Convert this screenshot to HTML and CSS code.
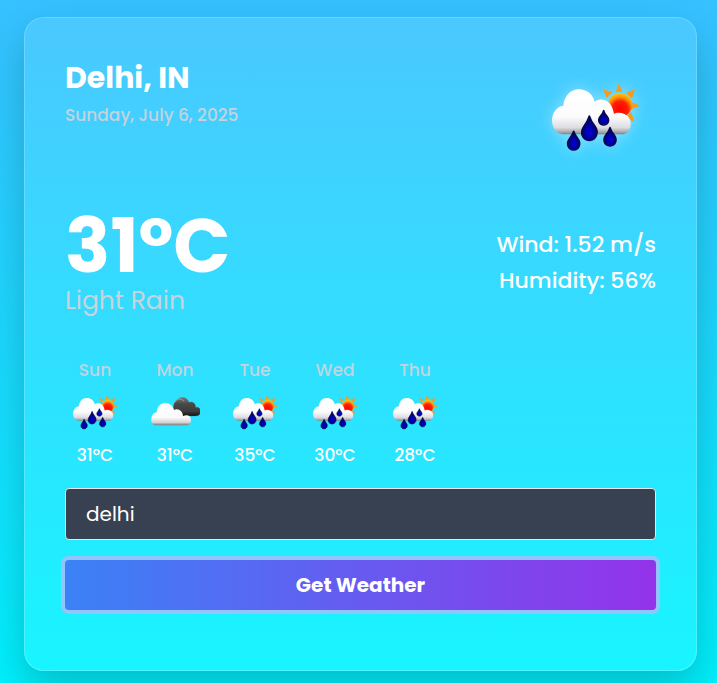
FILE: index.html
```html
<!DOCTYPE html>
<html lang="en">
<head>
<meta charset="utf-8">
<meta name="viewport" content="width=device-width, initial-scale=1">
<title>Weather</title>
<link rel="stylesheet" href="styles.css">
</head>
<body>
<svg class="defs" aria-hidden="true">
  <defs>
    <linearGradient id="cloud" x1="0" y1="58" x2="0" y2="194" gradientUnits="userSpaceOnUse">
      <stop offset="0" stop-color="#fff"/><stop offset=".6" stop-color="#fcfcfd"/>
      <stop offset=".84" stop-color="#dedee2"/><stop offset=".94" stop-color="#aaaab0"/><stop offset="1" stop-color="#777"/>
    </linearGradient>
    <radialGradient id="sun" cx=".5" cy=".68" r=".68">
      <stop offset="0" stop-color="#f00"/><stop offset=".5" stop-color="#ff2000"/>
      <stop offset=".75" stop-color="#ff9500"/><stop offset="1" stop-color="#ffc80b"/>
    </radialGradient>
    <radialGradient id="drop" cx=".5" cy=".65" r=".5">
      <stop offset="0" stop-color="#0000d8"/><stop offset=".5" stop-color="#0000ac"/><stop offset="1" stop-color="#050560"/>
    </radialGradient>
    <linearGradient id="dark" x1="0" y1="0" x2="0" y2="1">
      <stop offset="0" stop-color="#777"/><stop offset=".35" stop-color="#484848"/><stop offset=".75" stop-color="#3c3c3c"/><stop offset="1" stop-color="#111"/>
    </linearGradient>
    <symbol id="rain" viewBox="46 -6 294 294">
      <path fill="#f89a1c" d="M265 40l10 25-20 0zM217 58l28 9-17 17zM313 58l-9 28-18-18zM329 107l-28 11 0-22zM311 156l-27-14 18-16zM216 106l28-11v22z"/>
      <circle cx="268" cy="105" r="36" fill="url(#sun)"/>
      <path fill="url(#cloud)" d="M96 193C74 189 64 170 64 151 65 127 78 110 98 107 101 78 119 58 145 58 169 58 187 73 192 96 199 90 207 88 216 89 233 91 246 105 250 132 260 124 285 128 295 143 306 160 299 187 278 193Z"/>
      <g fill="url(#drop)" stroke="#080850" stroke-width="5" stroke-linejoin="round">
        <path d="M129 184Q132 194 142 207C152 220 146 239 129 240C112 239 106 222 116 207Q126 194 129 184Z"/>
        <path d="M176 138Q180 152 193 169C206 187 197 210 176 211C155 210 147 189 159 170Q172 152 176 138Z"/>
        <path d="M219 122Q221 131 229 139C238 151 233 164 219 165C205 164 200 151 209 139Q217 131 219 122Z"/>
        <path d="M238 173Q241 183 251 196C261 210 255 227 238 228C221 227 215 210 225 196Q235 183 238 173Z"/>
      </g>
    </symbol>
    <symbol id="clouds" viewBox="0 0 150 150">
      <path fill="url(#dark)" stroke="#666" stroke-width="1" d="M74 80C65 65 72 42 84 37 95 27 112 31 117 46 128 42 137 49 137 61 148 58 155 69 151 79Q148 87 138 87H84Z"/>
      <path fill="none" stroke="#999" stroke-width="3" d="M74 47Q77 37 89 36Q98 36 102 44"/>
      <path fill="url(#cloud2)" d="M18 115C8 115 3 107 4 96 5 84 10 78 20 76 21 60 31 48 46 48 59 48 69 57 72 69 84 62 99 72 99 88 111 80 123 87 123 99 123 109 117 115 110 115Z"/>
    </symbol>
    <linearGradient id="cloud2" x1="0" y1="0" x2="0" y2="1">
      <stop offset="0" stop-color="#fff"/><stop offset=".65" stop-color="#fafafa"/><stop offset=".87" stop-color="#d4d4d8"/><stop offset="1" stop-color="#777"/>
    </linearGradient>
  </defs>
</svg>
<main class="card">
  <header class="head">
    <div>
      <h1 class="city">Delhi, IN</h1>
      <p class="date">Sunday, July 6, 2025</p>
    </div>
    <svg class="hero" role="img" aria-label="Light rain"><use href="#rain"/></svg>
  </header>
  <section class="now">
    <div>
      <p class="temp">31°C</p>
      <p class="sky">Light Rain</p>
    </div>
    <div class="facts">
      <p>Wind: 1.52 m/s</p>
      <p>Humidity: 56%</p>
    </div>
  </section>
  <ul class="days">
    <li><span class="day">Sun</span><svg class="icon"><use href="#rain"/></svg><span class="deg">31°C</span></li>
    <li><span class="day">Mon</span><svg class="icon"><use href="#clouds"/></svg><span class="deg">31°C</span></li>
    <li><span class="day">Tue</span><svg class="icon"><use href="#rain"/></svg><span class="deg">35°C</span></li>
    <li><span class="day">Wed</span><svg class="icon"><use href="#rain"/></svg><span class="deg">30°C</span></li>
    <li><span class="day">Thu</span><svg class="icon"><use href="#rain"/></svg><span class="deg">28°C</span></li>
  </ul>
  <form class="search">
    <input class="field" type="text" aria-label="City" value="delhi">
    <button class="go" type="button">Get Weather</button>
  </form>
</main>
</body>
</html>
```
FILE: styles.css
```css
* { box-sizing: border-box; margin: 0; padding: 0; }

body {
  min-height: 100vh;
  padding: 17px 20px 12px 24px;
  font-family: Poppins, Inter, "Open Sans", sans-serif;
  color: #fff;
  background: linear-gradient(#36c0ff, #00f0fc) fixed;
  overflow: hidden;
}

.defs { position: absolute; width: 0; height: 0; }

.card {
  padding: 40px;
  border: 1px solid transparent;
  border-radius: 20px;
  background: linear-gradient(#4ac8ff, #18f5ff) padding-box, linear-gradient(#6ad4ff, #4af5ff) border-box;
  box-shadow: 0 20px 40px rgba(0, 0, 0, .2);
}

.head { display: flex; justify-content: space-between; height: 150px; }
.city { font-size: 30px; line-height: 40px; font-weight: 700; }
.date { margin-top: 3px; font-size: 17px; font-weight: 500; line-height: 28px; color: #c3d3de; }
.hero {
  width: 98px;
  height: 98px;
  margin: 10px 12px 0 0;
  filter: drop-shadow(0 0 8px rgba(255, 255, 255, .4));
}

.now { display: flex; justify-content: space-between; align-items: center; }
.temp { font-size: 75px; line-height: 76px; font-weight: 700; }
.sky { font-size: 25px; line-height: 34px; color: #c8d3db; }
.facts { font-size: 22px; font-weight: 500; line-height: 36px; text-align: right; }

.days { display: flex; gap: 20px; margin-top: 38px; list-style: none; }
.days li {
  display: flex;
  flex-direction: column;
  align-items: center;
  width: 60px;
  gap: 3px;
  font-size: 17px;
  font-weight: 500;
  line-height: 28px;
}
.day { color: #bfd5df; }
.deg { line-height: 30px; }
.icon { width: 50px; height: 50px; }

.search { display: grid; gap: 20px; margin: 18px 0 20px; }
.field, .go { width: 100%; border-radius: 4px; font: inherit; font-size: 20px; color: #fff; }
.field { height: 52px; padding: 0 20px; border: 1px solid #e5e7eb; background: #374151; outline: 0; }
.go {
  height: 50px;
  border: 0;
  font-weight: 700;
  background: linear-gradient(90deg, #3b82f6, #9333ea);
  box-shadow: 0 0 0 4px #93c5fd;
}
```
